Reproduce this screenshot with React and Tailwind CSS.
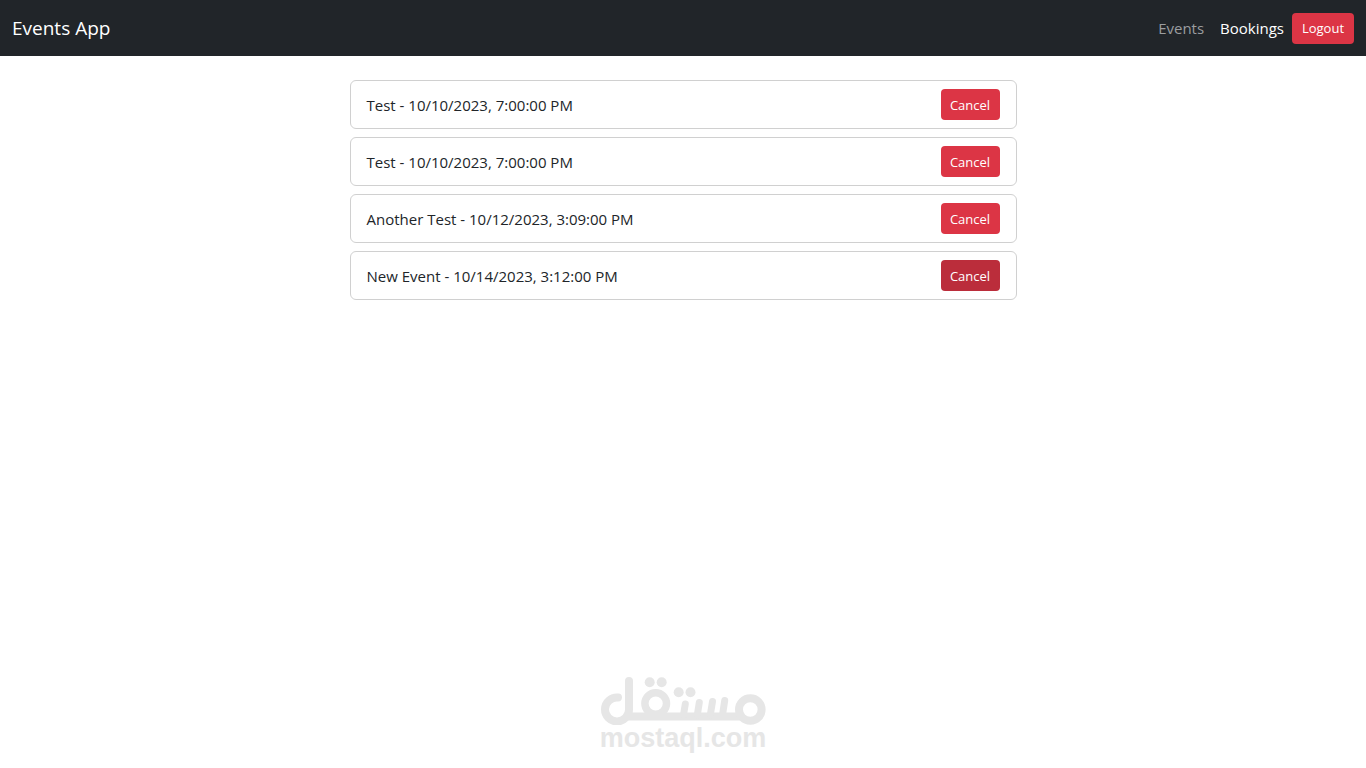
import { useState } from "react";

const initialBookings = [
  { id: 1, title: "Test", date: "10/10/2023, 7:00:00 PM" },
  { id: 2, title: "Test", date: "10/10/2023, 7:00:00 PM" },
  { id: 3, title: "Another Test", date: "10/12/2023, 3:09:00 PM" },
  { id: 4, title: "New Event", date: "10/14/2023, 3:12:00 PM", active: true }
];

const Navbar = () => (
  <nav className="flex h-14 items-center justify-between bg-[#212529] px-3">
    <a href="#home" className="text-[19px] leading-8 text-white">Events App</a>
    <div className="flex items-center gap-2">
      <div className="flex items-center gap-4">
        <a href="#events" className="text-[15px] leading-6 text-[#9b9d9f] hover:text-white">Events</a>
        <a href="#bookings" className="text-[15px] leading-6 text-white">Bookings</a>
      </div>
      <button type="button" className="h-[31px] w-[62px] rounded bg-[#dc3545] pt-0.5 text-[13px] text-white hover:bg-[#bb2d3b]">
        Logout
      </button>
    </div>
  </nav>
);

const BookingItem = ({ booking, onCancel }) => (
  <li className="flex items-center justify-between rounded-md border border-[#d0d0d0] px-4 py-2">
    <span className="text-[15px] leading-6">{booking.title} - {booking.date}</span>
    <button
      type="button"
      onClick={() => onCancel(booking.id)}
      className={`h-[31px] w-[59px] rounded pt-0.5 text-[13px] text-white hover:bg-[#bb2d3b] ${booking.active ? "bg-[#bb2d3b]" : "bg-[#dc3545]"}`}
    >
      Cancel
    </button>
  </li>
);

const Mark = () => (
  <svg className="h-12 w-[165px]" viewBox="0 0 165 48" fill="none" stroke="currentColor" strokeWidth="8" strokeLinecap="round" aria-hidden="true">
    {/* lam and the joining line */}
    <path d="M17 20.5A12 12 0 1 0 28 32V4" />
    <path d="M28 39.5H138" />
    {/* qaf and meem rings */}
    <circle cx="54.7" cy="26.5" r="10.8" strokeWidth="7.5" />
    <circle cx="149.3" cy="32.5" r="11.3" />
    {/* teeth */}
    <path strokeWidth="7" d="M84.3 27L82.5 38M98.3 25.5L96.3 38M111.5 24.5L109.3 38M123.7 23.5L121.5 38" />
    {/* dots */}
    <g fill="currentColor" stroke="none">
      <circle cx="48.7" cy="5.2" r="5" />
      <circle cx="60.7" cy="5.2" r="5" />
      <circle cx="77.7" cy="15.3" r="5" />
      <circle cx="89.5" cy="15.3" r="5" />
    </g>
  </svg>
);

const App = () => {
  const [bookings, setBookings] = useState(initialBookings);

  const handleCancel = (id) => {
    setBookings((prev) => prev.filter((booking) => booking.id !== id));
  };

  return (
    <div className="flex min-h-screen flex-col bg-white font-['Open_Sans','Noto_Sans',sans-serif] text-[#212529]">
      <Navbar />

      <main className="mx-auto w-1/2 px-2 py-6">
        <ul className="flex flex-col gap-2">
          {bookings.map((booking) => (
            <BookingItem key={booking.id} booking={booking} onCancel={handleCancel} />
          ))}
        </ul>
      </main>

      <footer className="mt-auto flex flex-col items-center pb-4 text-[#e6e6e6]">
        <Mark />
        <p className="font-['Liberation_Sans',sans-serif] text-[27px] leading-[27px] font-bold">mostaql.com</p>
      </footer>
    </div>
  );
};

export default App;
